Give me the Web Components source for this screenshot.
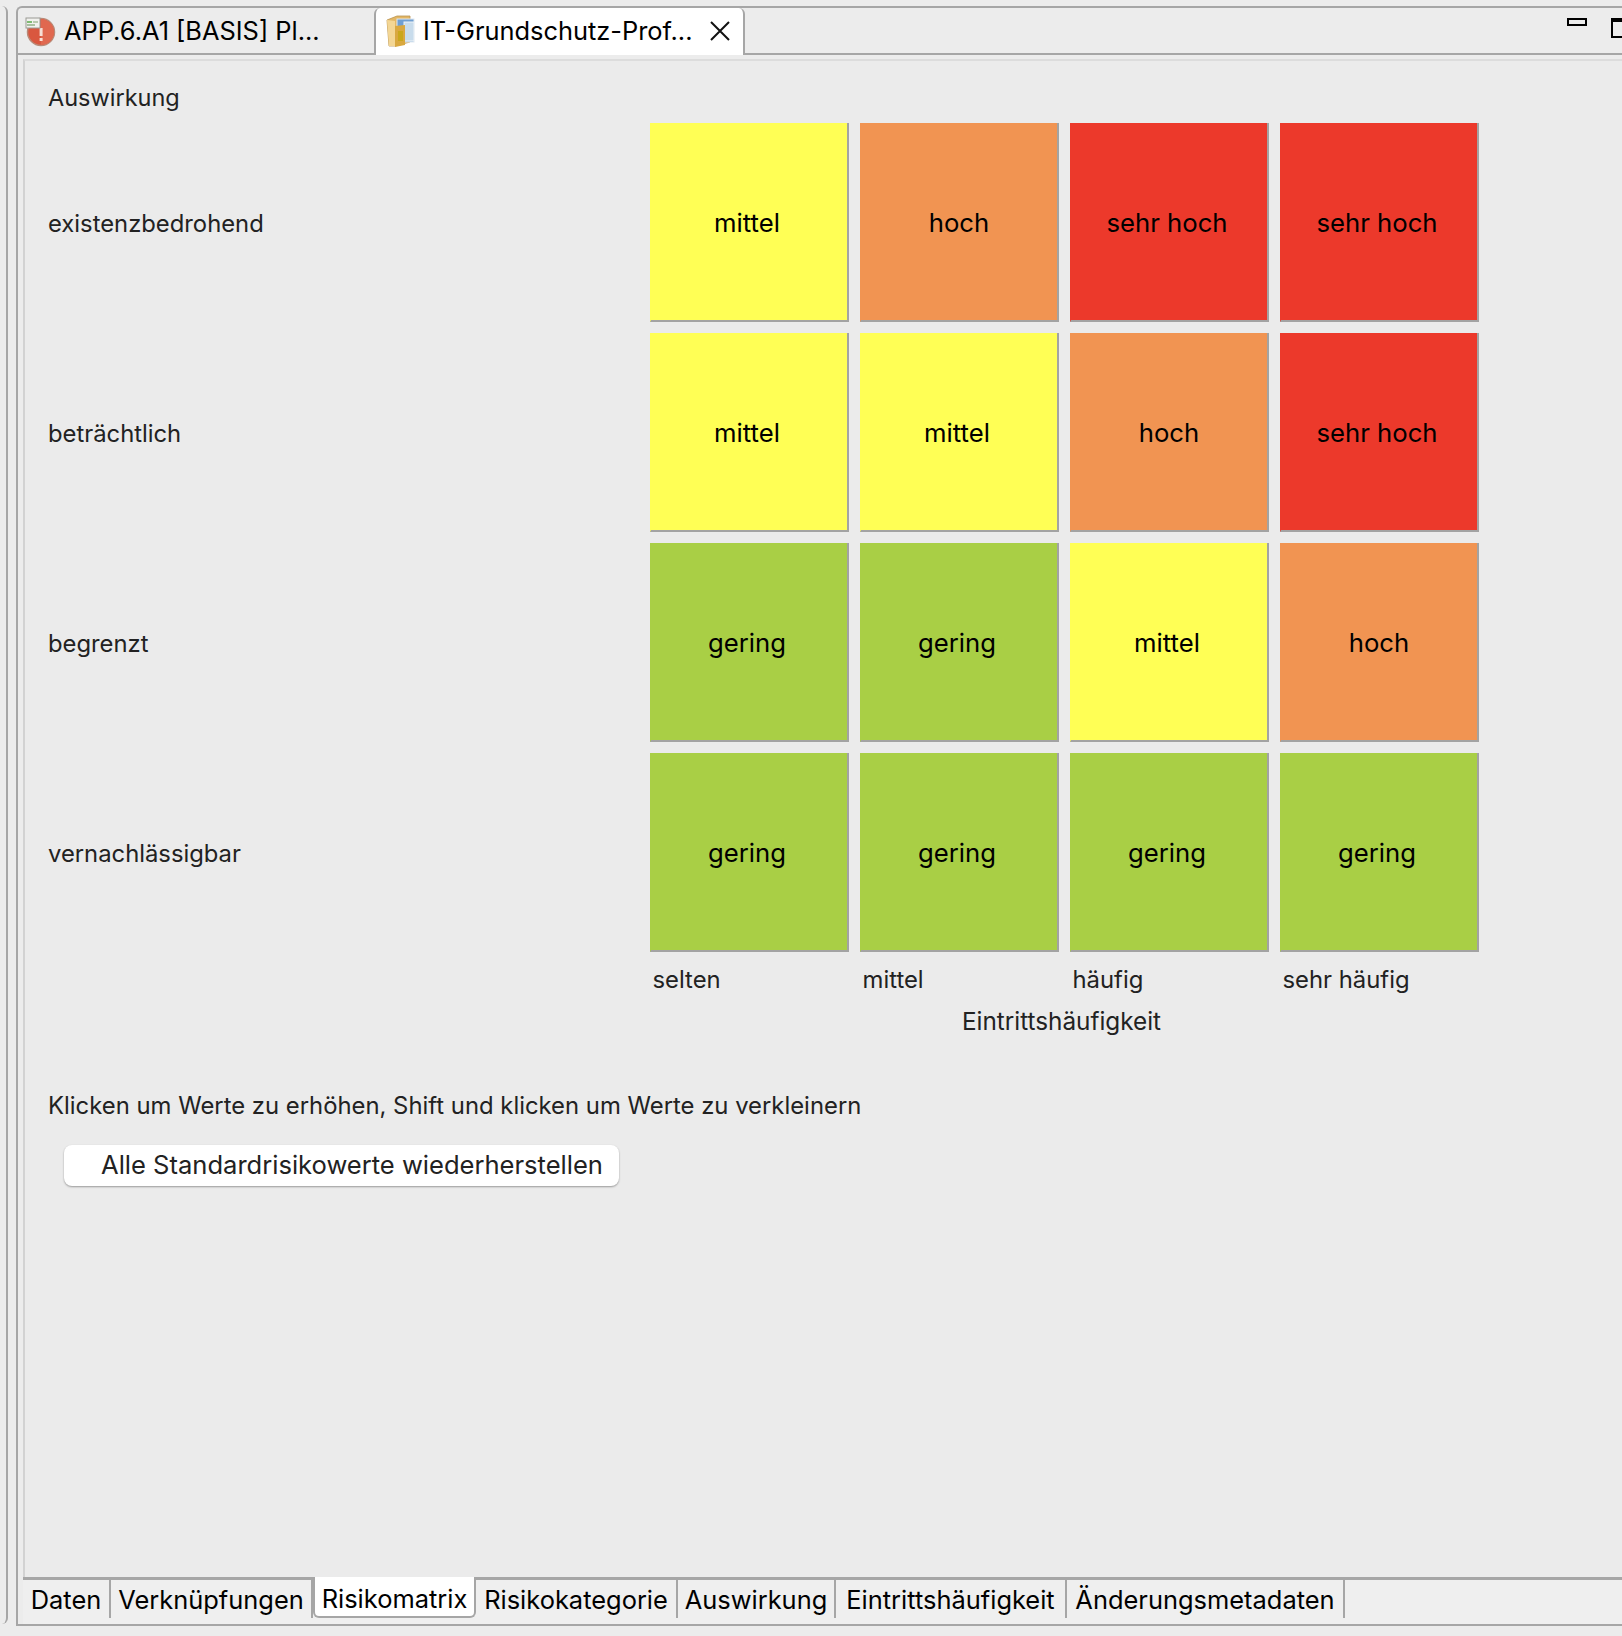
<!DOCTYPE html>
<html lang="de">
<head>
<meta charset="utf-8">
<title>Risikomatrix</title>
<style>
  html, body { margin: 0; height: 100%; }
  body { background: #ececec; font-family: Inter, "Liberation Sans", sans-serif; overflow: hidden; }
</style>
</head>
<body>
<app-window>
  <editor-tabs>
    <editor-tab icon="risk" style="width:356px">APP.6.A1 [BASIS] Pl...</editor-tab>
    <editor-tab icon="folder" active closable style="width:371px">IT-Grundschutz-Prof...</editor-tab>
  </editor-tabs>
  <risk-matrix></risk-matrix>
  <page-tabs>
    <page-tab style="width:88px">Daten</page-tab>
    <page-tab style="width:202px">Verknüpfungen</page-tab>
    <page-tab active style="width:163px">Risikomatrix</page-tab>
    <page-tab style="width:202px">Risikokategorie</page-tab>
    <page-tab style="width:158px">Auswirkung</page-tab>
    <page-tab style="width:231px">Eintrittshäufigkeit</page-tab>
    <page-tab style="width:278px">Änderungsmetadaten</page-tab>
  </page-tabs>
</app-window>

<script>
// Hauptfenster: schmale Leiste links, rechts der Editor
class AppWindow extends HTMLElement {
  constructor() {
    super()
    this.attachShadow({ mode: 'open' })
    this.shadowRoot.innerHTML = `
      <style>
        :host { display: flex; height: 1636px; width: 1622px; overflow: hidden; background: #ececec; }
        .stub { width: 6px; flex: none; margin: 6px 0 12px; border-right: 2px solid #a6a6a6; border-radius: 0 6px 6px 0; }
        .editor {
          flex: 1; margin: 6px 0 10px 8px; border: 2px solid #a6a6a6; border-right: 0; border-radius: 6px 0 0 0;
          display: flex; flex-direction: column; min-width: 0;
        }
      </style>
      <div class="stub"></div>
      <div class="editor"><slot></slot></div>
    `
  }
}

class EditorTabs extends HTMLElement {
  constructor() {
    super()
    this.attachShadow({ mode: 'open' })
    this.shadowRoot.innerHTML = `
      <style>
        :host { display: flex; height: 45px; flex: none; border-bottom: 2px solid #a6a6a6; position: relative; }
        .controls { position: absolute; right: 0; top: 0; width: 55px; height: 45px; overflow: hidden; }
        .min { position: absolute; left: 0; top: 10px; width: 16px; height: 4px; border: 2px solid #000; }
        .max { position: absolute; left: 44px; top: 10px; width: 20px; height: 14px; border: 2px solid #000; border-top-width: 4px; }
      </style>
      <slot></slot>
      <div class="controls"><div class="min"></div><div class="max"></div></div>
    `
  }
}

class EditorTab extends HTMLElement {
  constructor() {
    super()
    this.attachShadow({ mode: 'open' })
    const icons = {
      risk: `<svg width="32" height="32" viewBox="0 0 32 32">
        <circle cx="17" cy="17" r="13.5" fill="#d9573f" stroke="#b98a78" stroke-width="1.5"/>
        <path d="M17 4a13 13 0 0 1 0 26z" fill="#e0684f"/>
        <rect x="15.6" y="13" width="3" height="8" fill="#f6dfd6"/><rect x="15.6" y="23" width="3" height="3" fill="#f6dfd6"/>
        <rect x="2" y="3" width="14" height="10" fill="#f1f1ee" stroke="#9a9a94"/>
        <rect x="3" y="6" width="5" height="2" fill="#7fbb73"/><rect x="9" y="6" width="5" height="2" fill="#b9c9ae"/>
        <rect x="3" y="9" width="8" height="2" fill="#a9bfa0"/></svg>`,
      folder: `<svg width="32" height="36" viewBox="0 0 32 36">
        <path d="M3 7l10-4h13v26l-15 4H5z" fill="#e3b765" stroke="#b99350" stroke-width=".8"/>
        <path d="M3 7l8 1v25l-6 0z" fill="#f3d694"/>
        <rect x="13" y="6" width="17" height="23" fill="#6f9fd2" stroke="#dfe8f0"/>
        <rect x="20" y="9" width="10" height="19" fill="#c8dcec" stroke="#eef3f7"/>
        <path d="M11 13l10-1v20l-10 2z" fill="#d9a83f"/>
        <rect x="14" y="18" width="5" height="10" fill="#c9a71c"/></svg>`
    }
    this.shadowRoot.innerHTML = `
      <style>
        :host { display: flex; align-items: center; height: 45px; box-sizing: border-box; font-size: 25.4px; color: #000; flex: none; }
        :host([active]) {
          background: #fff; margin-bottom: -2px; height: 47px; padding-bottom: 2px;
          border-left: 2px solid #a6a6a6; border-right: 2px solid #a6a6a6; border-radius: 6px 6px 0 0;
        }
        .icon { display: flex; width: 46px; flex: none; padding-left: 6px; box-sizing: border-box; }
        :host([active]) .icon { width: 47px; padding-left: 8px; }
        .text { white-space: nowrap; }
        svg.close { margin-left: 17px; flex: none; }
      </style>
      <span class="icon">${icons[this.getAttribute('icon')]}</span>
      <span class="text"><slot></slot></span>
      ${this.hasAttribute('closable') ? `<svg class="close" width="20" height="20" viewBox="0 0 20 20"><path d="M1 1l18 18M19 1L1 19" stroke="#111" stroke-width="2"/></svg>` : ''}
    `
  }
}

// Eine Zelle der Matrix, Farbe kommt aus dem Wert
class RiskCell extends HTMLElement {
  constructor() {
    super()
    this.attachShadow({ mode: 'open' })
    const level = this.getAttribute('level')
    const colors = { 'gering': '#a9cf45', 'mittel': '#ffff55', 'hoch': '#f19452', 'sehr hoch': '#ec392b' }
    this.shadowRoot.innerHTML = `
      <style>
        :host {
          display: flex; align-items: center; justify-content: center; box-sizing: border-box;
          width: 199px; height: 199px; background: ${colors[level]}; padding-top: 1px;
          border-right: 2px solid #a3a3a3; border-bottom: 2px solid #a3a3a3; border-left: 1px solid ${colors[level]};
          font-size: 25.7px; color: #000; padding-right: ${level === 'hoch' ? 0 : 4}px;
        }
      </style>
      ${level}
    `
  }
}

class RiskMatrix extends HTMLElement {
  constructor() {
    super()
    this.attachShadow({ mode: 'open' })
    const rows = [
      ['existenzbedrohend', ['mittel', 'hoch', 'sehr hoch', 'sehr hoch']],
      ['beträchtlich', ['mittel', 'mittel', 'hoch', 'sehr hoch']],
      ['begrenzt', ['gering', 'gering', 'mittel', 'hoch']],
      ['vernachlässigbar', ['gering', 'gering', 'gering', 'gering']]
    ]
    const body = rows.map(([label, cells]) => `
      <div class="label">${label}</div>
      ${cells.map(c => `<risk-cell level="${c}"></risk-cell>`).join('')}
    `).join('')
    this.shadowRoot.innerHTML = `
      <style>
        :host {
          display: block; flex: 1; min-height: 0; margin-top: 4px; margin-left: 5px;
          border-top: 2px solid #dcdcdc; border-left: 2px solid #d2d2d2;
          padding: 19px 0 0 23px; color: #222; font-size: 23.85px; background: #ebebeb;
        }
        .title { height: 43px; line-height: 36px; font-size: 23.5px; }
        .grid { display: grid; grid-template-columns: 591px repeat(4, 199px); column-gap: 11px; row-gap: 11px; }
        .label { display: flex; align-items: center; margin-right: -11px; font-size: 23.8px; padding-top: 1px; }
        .axis { display: grid; grid-template-columns: repeat(4, 199px); column-gap: 11px; margin: 13px 0 0 602px; height: 30px; line-height: 30px; }
        .axis span { padding-left: 2.5px; }
        .axis-title { margin: 11px 0 0 600px; width: 827px; text-align: center; height: 30px; line-height: 30px; font-size: 24.3px; }
        .hint { margin-top: 55px; height: 30px; line-height: 30px; }
        button {
          display: block; margin: 24px 0 0 16px; width: 555px; height: 41px; padding: 0 0 2px 37px; border: 0; border-radius: 8px;
          background: #fff; box-shadow: 0 1px 2px rgba(0,0,0,.35); text-align: left; font: inherit; font-size: 25.55px; color: #222;
        }
      </style>
      <div class="title">Auswirkung</div>
      <div class="grid">${body}</div>
      <div class="axis"><span>selten</span><span>mittel</span><span>häufig</span><span>sehr häufig</span></div>
      <div class="axis-title">Eintrittshäufigkeit</div>
      <div class="hint">Klicken um Werte zu erhöhen, Shift und klicken um Werte zu verkleinern</div>
      <button>Alle Standardrisikowerte wiederherstellen</button>
    `
  }
}

class PageTabs extends HTMLElement {
  constructor() {
    super()
    this.attachShadow({ mode: 'open' })
    this.shadowRoot.innerHTML = `
      <style>
        :host { display: flex; flex: none; height: 38px; margin-left: 5px; border-top: 3px solid #a6a6a6; background: #efefef; padding-bottom: 6px; }
      </style>
      <slot></slot>
    `
  }
}

class PageTab extends HTMLElement {
  constructor() {
    super()
    this.attachShadow({ mode: 'open' })
    this.shadowRoot.innerHTML = `
      <style>
        :host {
          display: flex; align-items: center; justify-content: center; box-sizing: border-box; flex: none;
          height: 38px; border-right: 2px solid #a6a6a6; font-size: 25.45px; color: #000; white-space: nowrap;
        }
        :host([active]) {
          background: #fff; border: 2px solid #a6a6a6; border-top: 0; border-radius: 0 0 6px 6px;
          height: 41px; margin-top: -3px; padding-top: 3px;
        }
      </style>
      <slot></slot>
    `
  }
}

customElements.define('app-window', AppWindow)
customElements.define('editor-tabs', EditorTabs)
customElements.define('editor-tab', EditorTab)
customElements.define('risk-cell', RiskCell)
customElements.define('risk-matrix', RiskMatrix)
customElements.define('page-tabs', PageTabs)
customElements.define('page-tab', PageTab)
</script>
</body>
</html>
